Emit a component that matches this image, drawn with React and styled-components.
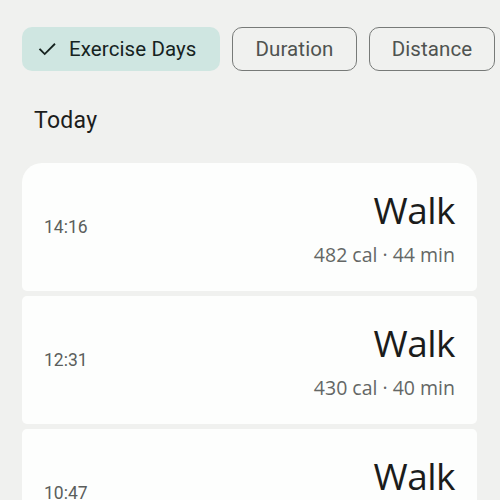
import React from "react";
import styled, { createGlobalStyle } from "styled-components";

const Global = createGlobalStyle`
  html, body { margin: 0; padding: 0; background: #f0f1ef; }
  body { width: 500px; height: 500px; overflow: hidden; font-family: Roboto, "Noto Sans", sans-serif; }
`;

const Page = styled.div`
  width: 500px;
  height: 500px;
  overflow: hidden;
  background: #f0f1ef;
  padding: 27px 0 0 22px;
  box-sizing: border-box;
`;

const ChipRow = styled.div`
  display: flex;
  gap: 12px;
  white-space: nowrap;
`;

const Chip = styled.div`
  height: 44px;
  box-sizing: border-box;
  display: flex;
  align-items: center;
  gap: 11px;
  padding: ${(p) => (p.$selected ? "0 20px 0 14px" : "0 20px")};
  border-radius: 10px;
  font-size: 20.5px;
  letter-spacing: 0.1px;
  background: ${(p) => (p.$selected ? "#cfe6e1" : "transparent")};
  border: ${(p) => (p.$selected ? "none" : "1.3px solid #777a78")};
  color: ${(p) => (p.$selected ? "#16231f" : "#4f5350")};
  flex: 0 0 auto;
  width: ${(p) => p.$w}px;
  justify-content: ${(p) => (p.$selected ? "flex-start" : "center")};
`;

const SectionTitle = styled.div`
  margin: 36px 0 0 12px;
  font-size: 23px;
  letter-spacing: 0.3px;
  color: #1c1d1c;
  line-height: 28px;
`;

const List = styled.div`
  margin-top: 28px;
  width: 455px;
  display: flex;
  flex-direction: column;
  gap: 5px;
`;

const Card = styled.div`
  height: 128px;
  box-sizing: border-box;
  background: #fdfefd;
  border-radius: ${(p) => (p.$first ? "20px 20px 5px 5px" : "5px")};
  display: flex;
  align-items: center;
  justify-content: space-between;
  padding: 0 22px;
  flex: 0 0 auto;
`;

const Time = styled.div`
  font-size: 17.5px;
  color: #5b5e5c;
`;

const Right = styled.div`
  display: flex;
  flex-direction: column;
  align-items: flex-end;
`;

const Activity = styled.div`
  font-family: "Open Sans", sans-serif;
  font-size: 37px;
  line-height: 44px;
  color: #1b1c1b;
  letter-spacing: -0.5px;
`;

const Stats = styled.div`
  font-family: "Open Sans", sans-serif;
  font-size: 19.5px;
  line-height: 24px;
  color: #646765;
  margin-top: 11px;
`;

const Check = () => (
  <svg width="22" height="22" viewBox="0 0 24 24" fill="none">
    <path d="M4.5 12.5l5 5L20 7" stroke="#16231f" strokeWidth="2" strokeLinecap="square" />
  </svg>
);

const items = [
  { time: "14:16", name: "Walk", stats: "482 cal · 44 min" },
  { time: "12:31", name: "Walk", stats: "430 cal · 40 min" },
  { time: "10:47", name: "Walk", stats: "401 cal · 37 min" },
];

export default function App() {
  return (
    <Page>
      <Global />
      <ChipRow>
        <Chip $selected $w={198}>
          <Check />
          Exercise Days
        </Chip>
        <Chip $w={125}>Duration</Chip>
        <Chip $w={126}>Distance</Chip>
      </ChipRow>
      <SectionTitle>Today</SectionTitle>
      <List>
        {items.map((it, i) => (
          <Card key={i} $first={i === 0}>
            <Time>{it.time}</Time>
            <Right>
              <Activity>{it.name}</Activity>
              <Stats>{it.stats}</Stats>
            </Right>
          </Card>
        ))}
      </List>
    </Page>
  );
}
